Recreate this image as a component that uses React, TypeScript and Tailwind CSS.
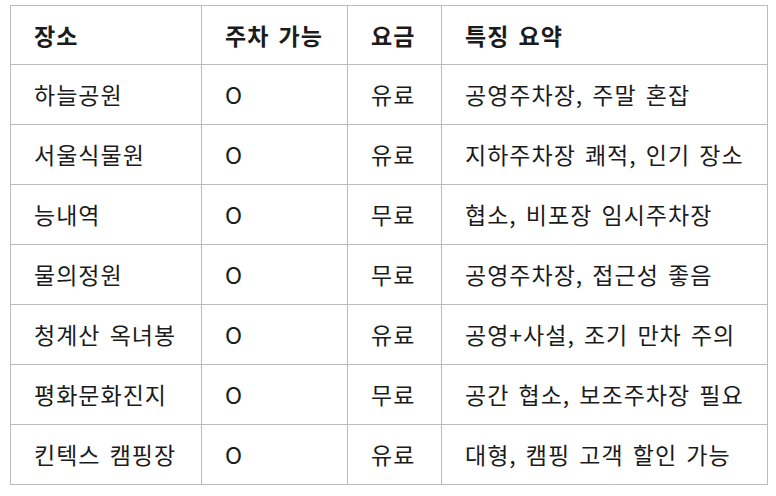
const rows = [
  ["하늘공원", "O", "유료", "공영주차장, 주말 혼잡"],
  ["서울식물원", "O", "유료", "지하주차장 쾌적, 인기 장소"],
  ["능내역", "O", "무료", "협소, 비포장 임시주차장"],
  ["물의정원", "O", "무료", "공영주차장, 접근성 좋음"],
  ["청계산 옥녀봉", "O", "유료", "공영+사설, 조기 만차 주의"],
  ["평화문화진지", "O", "무료", "공간 협소, 보조주차장 필요"],
  ["킨텍스 캠핑장", "O", "유료", "대형, 캠핑 고객 할인 가능"],
];

export default function App() {
  return (
    <div className="min-h-screen bg-white pl-[10px] pt-[5px] font-['Noto_Sans_CJK_KR','Noto_Sans',sans-serif] text-[#1b1b1b]">
      <table className="table-fixed border-collapse text-[23px] tracking-[1px] [word-spacing:3px]">
        <colgroup>
          <col className="w-[191px]" />
          <col className="w-[146px]" />
          <col className="w-[94px]" />
          <col className="w-[325px]" />
        </colgroup>
        <thead>
          <tr className="h-[59px]">
            <th className="border border-[#bcbcbc] px-[23px] text-left font-bold">장소</th>
            <th className="border border-[#bcbcbc] px-[23px] text-left font-bold">주차 가능</th>
            <th className="border border-[#bcbcbc] px-[23px] text-left font-bold">요금</th>
            <th className="border border-[#bcbcbc] px-[23px] text-left font-bold">특징 요약</th>
          </tr>
        </thead>
        <tbody>
          {rows.map((r) => (
            <tr key={r[0]} className="h-[60px]">
              {r.map((c, i) => (
                <td key={i} className="border border-[#bcbcbc] px-[23px] whitespace-nowrap">
                  {c}
                </td>
              ))}
            </tr>
          ))}
        </tbody>
      </table>
    </div>
  );
}
